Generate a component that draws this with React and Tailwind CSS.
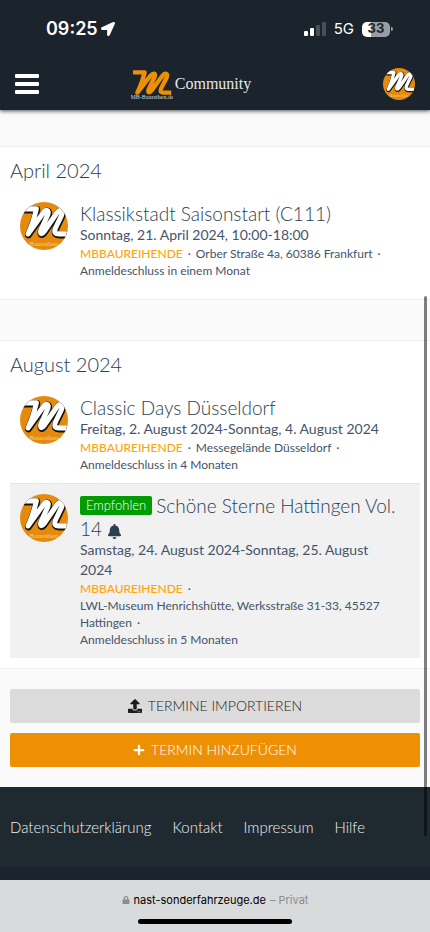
import React from "react";
import { FaLocationArrow, FaBell, FaPlus, FaLock, FaUpload } from "react-icons/fa";

const M_PATH =
  "M3 7 H38 C32 30 25 50 16 68 L54 19 C63 7 73 9 68 21 L50 58 C46 69 52 70 59 61 L91 18 C99 7 110 10 104 23 L88 54 C83 66 88 68 97 68 H118";

function Wordmark() {
  return (
    <svg viewBox="0 0 42 32" className="h-8 w-[42px]" role="img" aria-label="MB-Baureihen.de">
      <g transform="translate(1 2) scale(0.333)">
        <path d={M_PATH} fill="none" stroke="#ee9004" strokeWidth="13" strokeLinejoin="round" />
      </g>
      <text x="21" y="31" textAnchor="middle" fontFamily="Liberation Serif, serif" fontSize="6" fill="#d5d7d9">
        MB-Baureihen.de
      </text>
    </svg>
  );
}

function Avatar({ className, id }) {
  return (
    <svg viewBox="0 0 48 48" className={className} role="img" aria-label="MBBAUREIHENDE">
      <clipPath id={id}>
        <circle cx="24" cy="24" r="24" />
      </clipPath>
      <g clipPath={`url(#${id})`}>
        <rect width="48" height="48" fill="#e58a0c" />
        <text x="24" y="44" textAnchor="middle" fontFamily="Liberation Serif, serif" fontSize="7" fill="#f0cf8c">
          Baureihen
        </text>
        <g transform="translate(2 4) scale(0.38 0.41)" fill="none" strokeLinejoin="round">
          <path d={M_PATH} stroke="#17120c" strokeWidth="18" transform="translate(1 2)" />
          <path d={M_PATH} stroke="#ffffff" strokeWidth="13" />
        </g>
      </g>
    </svg>
  );
}

function Dot() {
  return <span className="mx-[5px]">·</span>;
}

function Event({ id, title, date, featured, children }) {
  return (
    <li className={featured ? "flex gap-3 border-t border-[#e4e4e4] bg-[#f1f1f1] p-[10px]" : "flex gap-3 p-[10px]"}>
      <Avatar id={id} className="size-12 shrink-0" />
      <div className="min-w-0 flex-1">
        <h3 className="text-[19px] leading-[23px] font-light">{title}</h3>
        <p className="text-sm leading-5 text-[#44546a]">{date}</p>
        <div className="text-xs leading-[17px] text-[#44546a]">
          <a href="#profil" className="font-medium text-[#ffa50a]">MBBAUREIHENDE</a>
          <Dot />
          {children}
        </div>
      </div>
    </li>
  );
}

function Month({ name, children }) {
  return (
    <section className="border-y border-[#edf0f5] bg-white p-[10px]">
      <h2 className="mb-[9px] text-xl leading-[26px] font-light">{name}</h2>
      <ul>{children}</ul>
    </section>
  );
}

export default function App() {
  return (
    <div className="relative bg-[#fafafa] font-['Lato',sans-serif] text-[#2c3e50]">
      <header className="relative bg-[#1b232c] text-white shadow-[0_1px_4px_rgba(0,0,0,0.7)]">
        <div className="flex h-[58px] items-center justify-between pr-[37px] pl-[46px] font-['Inter',sans-serif]">
          <div className="flex items-center gap-[3px] text-lg font-semibold">
            <time>09:25</time>
            <FaLocationArrow className="size-[14px]" />
          </div>
          <div className="flex items-center gap-2">
            <div className="flex h-[14px] items-end gap-[2px]">
              <span className="h-[5px] w-1 rounded-[1px] bg-white" />
              <span className="h-2 w-1 rounded-[1px] bg-white" />
              <span className="h-[11px] w-1 rounded-[1px] bg-[#484f56]" />
              <span className="h-[14px] w-1 rounded-[1px] bg-[#484f56]" />
            </div>
            <span className="text-[15px]">5G</span>
            <div className="flex items-center gap-px">
              <span className="flex h-[15px] w-7 items-center justify-center rounded-[5px] bg-linear-to-r from-white from-33% to-[#9a9da1] to-33% text-[13px] font-bold text-[#1b232c]">
                33
              </span>
              <span className="h-1 w-[2px] rounded-r bg-[#9a9da1]" />
            </div>
          </div>
        </div>
        <div className="flex h-[52px] items-center justify-between px-[15px]">
          <button type="button" aria-label="Menü">
            <svg viewBox="0 0 24 20" className="h-5 w-6" fill="#fff">
              <rect width="24" height="4" rx="1" />
              <rect y="8" width="24" height="4" rx="1" />
              <rect y="16" width="24" height="4" rx="1" />
            </svg>
          </button>
          <a href="#start" className="flex items-center gap-[2px] font-['Liberation_Serif',serif] text-base text-[#e6e7e8]">
            <Wordmark />
            <span>Community</span>
          </a>
          <button type="button" aria-label="Profil" className="flex w-[72px] justify-end">
            <Avatar id="user" className="size-8" />
          </button>
        </div>
      </header>

      <main className="pt-9">
        <Month name="April 2024">
          <Event id="april" title="Klassikstadt Saisonstart (C111)" date="Sonntag, 21. April 2024, 10:00-18:00">
            Orber Straße 4a, 60386 Frankfurt<Dot /><br />
            Anmeldeschluss in einem Monat
          </Event>
        </Month>
        <div className="h-10" />
        <Month name="August 2024">
          <Event id="classic" title="Classic Days Düsseldorf" date="Freitag, 2. August 2024-Sonntag, 4. August 2024">
            Messegelände Düsseldorf<Dot /><br />
            Anmeldeschluss in 4 Monaten
          </Event>
          <Event
            id="sterne"
            featured
            title={
              <>
                <span className="mt-[2px] mr-1 inline-block rounded-[2px] bg-[#009c00] px-[6px] align-top text-[13px] leading-[19px] text-white">
                  Empfohlen
                </span>
                Schöne Sterne Hattingen Vol.<br />
                14 <FaBell className="inline size-[15px]" />
              </>
            }
            date={<>Samstag, 24. August 2024-Sonntag, 25. August<br />2024</>}
          >
            <br />
            LWL-Museum Henrichshütte, Werksstraße 31-33, 45527<br />
            Hattingen<Dot /><br />
            Anmeldeschluss in 5 Monaten
          </Event>
        </Month>

        <div className="flex flex-col gap-[10px] px-[10px] py-5 text-sm">
          <button type="button" className="flex h-[34px] items-center justify-center gap-[6px] rounded-[2px] bg-[#dbdbdb] font-light text-[#222]">
            <FaUpload className="size-[14px] text-[#1b1b1b]" />
            TERMINE IMPORTIEREN
          </button>
          <button type="button" className="flex h-[34px] items-center justify-center gap-[6px] rounded-[2px] bg-[#ee9004] font-light text-white">
            <FaPlus className="size-3" />
            TERMIN HINZUFÜGEN
          </button>
        </div>
      </main>

      <footer>
        <nav className="flex h-20 items-center gap-[21px] bg-[#1f2930] px-[10px] text-[15px] font-light text-[#f0f1f2]">
          <a href="#datenschutz">Datenschutzerklärung</a>
          <a href="#kontakt">Kontakt</a>
          <a href="#impressum">Impressum</a>
          <a href="#hilfe">Hilfe</a>
        </nav>
        <div className="h-[13px] bg-[#1b232c]" />
        <div className="flex flex-col items-center bg-[#d9dadc] pt-[10px] pb-2 font-['Inter',sans-serif] text-[11px] leading-5">
          <p className="flex items-center gap-1 text-[#8b8c8f]">
            <FaLock className="size-2" />
            <span className="text-black">nast-sonderfahrzeuge.de</span> – Privat
          </p>
          <div className="mt-[9px] h-[5px] w-[154px] rounded-full bg-black" />
        </div>
      </footer>

      <div className="absolute top-[296px] right-[3px] h-[540px] w-[3px] rounded-full bg-black/50" />
    </div>
  );
}
